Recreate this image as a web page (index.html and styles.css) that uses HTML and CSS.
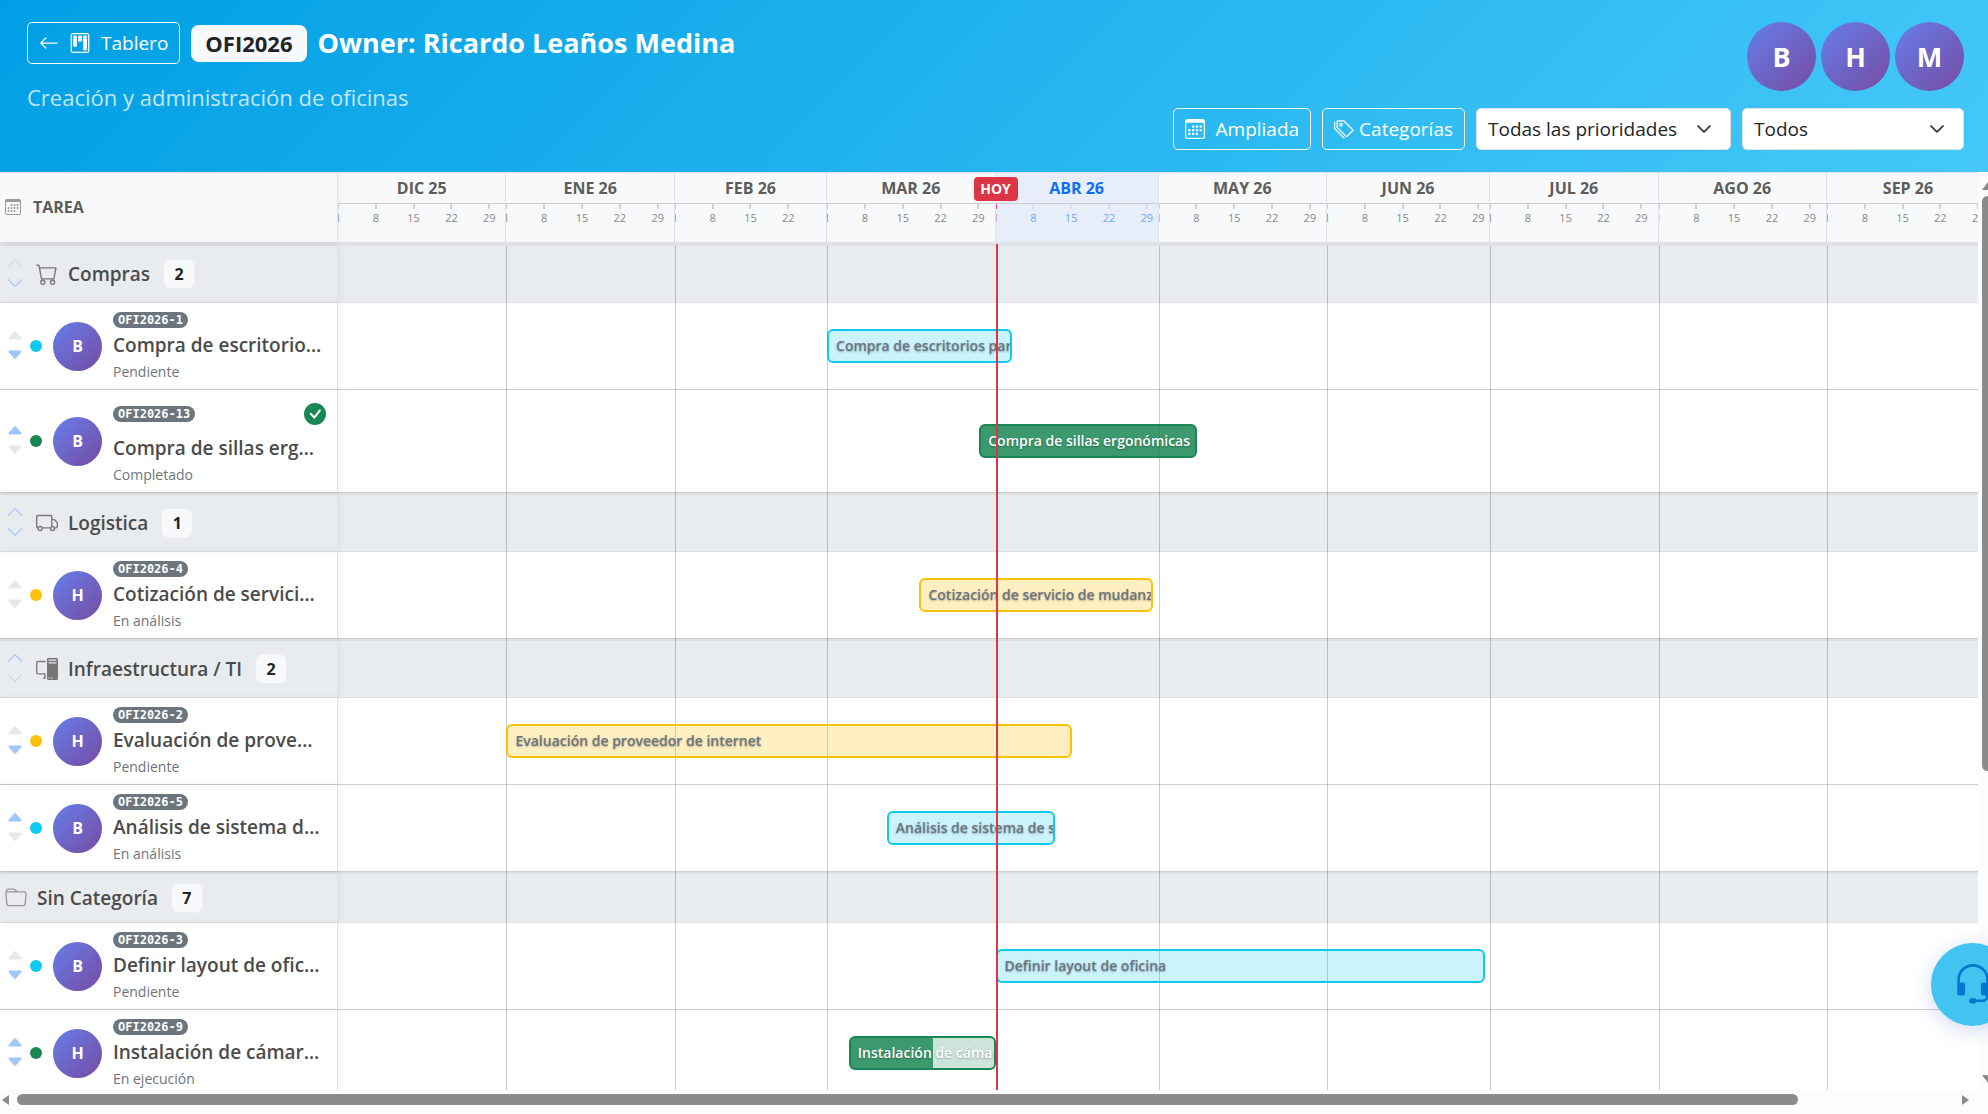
FILE: index.html
```html
<!DOCTYPE html>
<html lang="es">
<head>
<meta charset="utf-8">
<title>OFI2026 - Cronograma</title>
<link rel="stylesheet" href="styles.css">
</head>
<body>
<svg class="sprite" aria-hidden="true">
  <symbol id="i-calendar" viewBox="0 0 16 16"><path d="M14 0H2a2 2 0 0 0-2 2v12a2 2 0 0 0 2 2h12a2 2 0 0 0 2-2V2a2 2 0 0 0-2-2M1 3.857C1 3.384 1.448 3 2 3h12c.552 0 1 .384 1 .857v10.286c0 .473-.448.857-1 .857H2c-.552 0-1-.384-1-.857z"/><path d="M6.500 7a1 1 0 1 0 0-2 1 1 0 0 0 0 2m3 0a1 1 0 1 0 0-2 1 1 0 0 0 0 2m3 0a1 1 0 1 0 0-2 1 1 0 0 0 0 2m-9 3a1 1 0 1 0 0-2 1 1 0 0 0 0 2m3 0a1 1 0 1 0 0-2 1 1 0 0 0 0 2m3 0a1 1 0 1 0 0-2 1 1 0 0 0 0 2m3 0a1 1 0 1 0 0-2 1 1 0 0 0 0 2m-9 3a1 1 0 1 0 0-2 1 1 0 0 0 0 2m3 0a1 1 0 1 0 0-2 1 1 0 0 0 0 2m3 0a1 1 0 1 0 0-2 1 1 0 0 0 0 2"/></symbol>
  <symbol id="i-arrow" viewBox="0 0 16 16"><path fill-rule="evenodd" d="M15 8a.5.5 0 0 0-.5-.5H2.707l3.147-3.146a.5.5 0 1 0-.708-.708l-4 4a.5.5 0 0 0 0 .708l4 4a.5.5 0 0 0 .708-.708L2.707 8.500H14.500A.5.5 0 0 0 15 8"/></symbol>
  <symbol id="i-board" viewBox="0 0 16 16"><path d="M13.500 1a1 1 0 0 1 1 1v12a1 1 0 0 1-1 1h-11a1 1 0 0 1-1-1V2a1 1 0 0 1 1-1zm-11-1a2 2 0 0 0-2 2v12a2 2 0 0 0 2 2h11a2 2 0 0 0 2-2V2a2 2 0 0 0-2-2z"/><path d="M6.500 3a1 1 0 0 1 1-1h1a1 1 0 0 1 1 1v3a1 1 0 0 1-1 1h-1a1 1 0 0 1-1-1zm-4 0a1 1 0 0 1 1-1h1a1 1 0 0 1 1 1v7a1 1 0 0 1-1 1h-1a1 1 0 0 1-1-1zm8 0a1 1 0 0 1 1-1h1a1 1 0 0 1 1 1v10a1 1 0 0 1-1 1h-1a1 1 0 0 1-1-1z"/></symbol>
  <symbol id="i-tags" viewBox="0 0 16 16"><path d="M3 2v4.586l7 7L14.586 9l-7-7zM2 2a1 1 0 0 1 1-1h4.586a1 1 0 0 1 .707.293l7 7a1 1 0 0 1 0 1.414l-4.586 4.586a1 1 0 0 1-1.414 0l-7-7A1 1 0 0 1 2 6.586z"/><path d="M5.500 5a.5.5 0 1 1 0-1 .5.5 0 0 1 0 1m0 1a1.500 1.500 0 1 0 0-3 1.500 1.500 0 0 0 0 3M1 7.086a1 1 0 0 0 .293.707L8.750 15.250l-.043.043a1 1 0 0 1-1.414 0l-7-7A1 1 0 0 1 0 7.586V3a1 1 0 0 1 1-1z"/></symbol>
  <symbol id="i-up" viewBox="0 0 16 16"><path d="M7.646 4.646a.5.5 0 0 1 .708 0l6 6a.5.5 0 0 1-.708.708L8 5.707l-5.646 5.647a.5.5 0 0 1-.708-.708z"/></symbol>
  <symbol id="i-down" viewBox="0 0 16 16"><path d="M1.646 4.646a.5.5 0 0 1 .708 0L8 10.293l5.646-5.647a.5.5 0 0 1 .708.708l-6 6a.5.5 0 0 1-.708 0l-6-6a.5.5 0 0 1 0-.708"/></symbol>
  <symbol id="i-cup" viewBox="0 0 16 16"><path d="m7.247 4.860-4.796 5.481c-.566.647-.106 1.659.753 1.659h9.592a1 1 0 0 0 .753-1.659l-4.796-5.480a1 1 0 0 0-1.506 0z"/></symbol>
  <symbol id="i-cdown" viewBox="0 0 16 16"><path d="M7.247 11.140 2.451 5.658C1.885 5.013 2.345 4 3.204 4h9.592a1 1 0 0 1 .753 1.659l-4.796 5.480a1 1 0 0 1-1.506 0z"/></symbol>
  <symbol id="i-cart" viewBox="0 0 16 16"><path d="M0 1.500A.5.5 0 0 1 .5 1H2a.5.5 0 0 1 .485.379L2.890 3H14.500a.5.5 0 0 1 .491.592l-1.500 8A.5.5 0 0 1 13 12H4a.5.5 0 0 1-.491-.408L2.010 3.607 1.610 2H.5a.5.5 0 0 1-.5-.5M3.102 4l1.313 7h8.170l1.313-7zM5 12a2 2 0 1 0 0 4 2 2 0 0 0 0-4m7 0a2 2 0 1 0 0 4 2 2 0 0 0 0-4m-7 1a1 1 0 1 1 0 2 1 1 0 0 1 0-2m7 0a1 1 0 1 1 0 2 1 1 0 0 1 0-2"/></symbol>
  <symbol id="i-truck" viewBox="0 0 16 16"><path d="M0 3.500A1.500 1.500 0 0 1 1.500 2h9A1.500 1.500 0 0 1 12 3.500V5h1.020a1.500 1.500 0 0 1 1.170.563l1.481 1.850a1.500 1.500 0 0 1 .329.938V10.500a1.500 1.500 0 0 1-1.500 1.500H14a2 2 0 1 1-4 0H5a2 2 0 1 1-3.998-.085A1.500 1.500 0 0 1 0 10.500zm1.294 7.456A2 2 0 0 1 4.732 11h5.536a2 2 0 0 1 .732-.732V3.500a.5.5 0 0 0-.5-.5h-9a.5.5 0 0 0-.5.5v7a.5.5 0 0 0 .294.456M12 10a2 2 0 0 1 1.732 1h.768a.5.5 0 0 0 .5-.5V8.350a.5.5 0 0 0-.110-.312l-1.480-1.850A.5.5 0 0 0 13.020 6H12zm-9 1a1 1 0 1 0 0 2 1 1 0 0 0 0-2m9 0a1 1 0 1 0 0 2 1 1 0 0 0 0-2"/></symbol>
  <symbol id="i-pc" viewBox="0 0 16 16"><path d="M8 1a1 1 0 0 1 1-1h6a1 1 0 0 1 1 1v14a1 1 0 0 1-1 1H9a1 1 0 0 1-1-1zm1 13.500a.5.5 0 1 0 1 0 .5.5 0 0 0-1 0m2 0a.5.5 0 1 0 1 0 .5.5 0 0 0-1 0M9.500 1a.5.5 0 0 0 0 1h5a.5.5 0 0 0 0-1zM9 3.500a.5.5 0 0 0 .5.5h5a.5.5 0 0 0 0-1h-5a.5.5 0 0 0-.5.5M1.500 2A1.500 1.500 0 0 0 0 3.500v7A1.500 1.500 0 0 0 1.500 12H6v2h-.5a.5.5 0 0 0 0 1H7v-4H1.500a.5.5 0 0 1-.5-.5v-7a.5.5 0 0 1 .5-.5H7V2z"/></symbol>
  <symbol id="i-folder" viewBox="0 0 16 16"><path d="M.54 3.870.5 3a2 2 0 0 1 2-2h3.672a2 2 0 0 1 1.414.586l.828.828A2 2 0 0 0 9.828 3h3.982a2 2 0 0 1 1.992 2.181l-.637 7A2 2 0 0 1 13.174 14H2.826a2 2 0 0 1-1.991-1.819l-.637-7a2 2 0 0 1 .342-1.310zM2.190 4a1 1 0 0 0-.996 1.090l.637 7a1 1 0 0 0 .995.910h10.348a1 1 0 0 0 .995-.910l.637-7A1 1 0 0 0 13.810 4zm4.690-1.707A1 1 0 0 0 6.172 2H2.500a1 1 0 0 0-1 .981l.006.139q.323-.119.684-.12h5.396z"/></symbol>
  <symbol id="i-check" viewBox="0 0 16 16"><path d="M16 8A8 8 0 1 1 0 8a8 8 0 0 1 16 0m-3.970-3.030a.75.75 0 0 0-1.080.022L7.477 9.417 5.384 7.323a.75.75 0 0 0-1.060 1.060L6.970 11.030a.75.75 0 0 0 1.079-.020l3.992-4.990a.75.75 0 0 0-.010-1.050z"/></symbol>
  <symbol id="i-headset" viewBox="0 0 16 16"><path d="M8 1a5 5 0 0 0-5 5v1h1a1 1 0 0 1 1 1v3a1 1 0 0 1-1 1H3a1 1 0 0 1-1-1V6a6 6 0 1 1 12 0v6a2.500 2.500 0 0 1-2.500 2.500H9.366a1 1 0 0 1-.866.500h-1a1 1 0 1 1 0-2h1a1 1 0 0 1 .866.500H11.500A1.500 1.500 0 0 0 13 12h-1a1 1 0 0 1-1-1V8a1 1 0 0 1 1-1h1V6a5 5 0 0 0-5-5"/></symbol>
</svg>

<header class="hero">
  <div class="hero-info">
    <div class="hero-line">
      <a class="btn" href="#tablero"><svg><use href="#i-arrow"/></svg><svg><use href="#i-board"/></svg>Tablero</a>
      <span class="code">OFI2026</span>
      <h1>Owner: Ricardo Leaños Medina</h1>
    </div>
    <p>Creación y administración de oficinas</p>
  </div>
  <div class="hero-side">
    <div class="people"><span class="avatar">B</span><span class="avatar">H</span><span class="avatar">M</span></div>
    <div class="filters">
      <button class="btn" type="button"><svg><use href="#i-calendar"/></svg>Ampliada</button>
      <button class="btn snug" type="button"><svg><use href="#i-tags"/></svg>Categorías</button>
      <div class="select prio"><select aria-label="Prioridad"><option>Todas las prioridades</option></select><svg><use href="#i-down"/></svg></div>
      <div class="select all"><select aria-label="Estado"><option>Todos</option></select><svg><use href="#i-down"/></svg></div>
    </div>
  </div>
</header>

<main class="gantt">
  <div class="chart">
    <div class="row head">
      <div class="side"><svg><use href="#i-calendar"/></svg>TAREA</div>
      <div class="view"><div class="line months">
        <div class="month m31"><b>DIC 25</b><div class="days"><i>1</i><i>8</i><i>15</i><i>22</i><i>29</i></div></div>
        <div class="month m31"><b>ENE 26</b><div class="days"><i>1</i><i>8</i><i>15</i><i>22</i><i>29</i></div></div>
        <div class="month m28"><b>FEB 26</b><div class="days"><i>1</i><i>8</i><i>15</i><i>22</i></div></div>
        <div class="month m31"><b>MAR 26</b><div class="days"><i>1</i><i>8</i><i>15</i><i>22</i><i>29</i></div></div>
        <div class="month m30 now"><b>ABR 26</b><div class="days"><i>1</i><i>8</i><i>15</i><i>22</i><i>29</i></div></div>
        <div class="month m31"><b>MAY 26</b><div class="days"><i>1</i><i>8</i><i>15</i><i>22</i><i>29</i></div></div>
        <div class="month m30"><b>JUN 26</b><div class="days"><i>1</i><i>8</i><i>15</i><i>22</i><i>29</i></div></div>
        <div class="month m31"><b>JUL 26</b><div class="days"><i>1</i><i>8</i><i>15</i><i>22</i><i>29</i></div></div>
        <div class="month m31"><b>AGO 26</b><div class="days"><i>1</i><i>8</i><i>15</i><i>22</i><i>29</i></div></div>
        <div class="month m30"><b>SEP 26</b><div class="days"><i>1</i><i>8</i><i>15</i><i>22</i><i>29</i></div></div>
      </div></div>
    </div>

    <div class="row cat">
      <div class="side"><span class="move"><svg class="off"><use href="#i-up"/></svg><svg><use href="#i-down"/></svg></span><svg class="icon"><use href="#i-cart"/></svg>Compras<span class="count">2</span></div>
      <div class="view"></div>
    </div>
    <div class="row task">
      <div class="side"><span class="move"><svg class="off"><use href="#i-cup"/></svg><svg><use href="#i-cdown"/></svg></span><span class="dot info"></span><span class="avatar">B</span>
        <div class="text"><div class="top"><span class="id">OFI2026-1</span></div><a href="#t1">Compra de escritorios para oficina</a><small>Pendiente</small></div></div>
      <div class="view"><div class="line"><div class="bar info" style="--from:90;--len:34">Compra de escritorios para oficina</div></div></div>
    </div>
    <div class="row task done">
      <div class="side"><span class="move"><svg><use href="#i-cup"/></svg><svg class="off"><use href="#i-cdown"/></svg></span><span class="dot ok"></span><span class="avatar">B</span>
        <div class="text"><div class="top"><span class="id">OFI2026-13</span><svg><use href="#i-check"/></svg></div><a href="#t13">Compra de sillas ergonómicas</a><small>Completado</small></div></div>
      <div class="view"><div class="line"><div class="bar ok" style="--from:118;--len:40">Compra de sillas ergonómicas</div></div></div>
    </div>

    <div class="row cat">
      <div class="side"><span class="move"><svg><use href="#i-up"/></svg><svg><use href="#i-down"/></svg></span><svg class="icon"><use href="#i-truck"/></svg>Logistica<span class="count">1</span></div>
      <div class="view"></div>
    </div>
    <div class="row task">
      <div class="side"><span class="move"><svg class="off"><use href="#i-cup"/></svg><svg class="off"><use href="#i-cdown"/></svg></span><span class="dot warn"></span><span class="avatar">H</span>
        <div class="text"><div class="top"><span class="id">OFI2026-4</span></div><a href="#t4">Cotización de servicio de mudanza</a><small>En análisis</small></div></div>
      <div class="view"><div class="line"><div class="bar warn" style="--from:107;--len:43">Cotización de servicio de mudanza</div></div></div>
    </div>

    <div class="row cat">
      <div class="side"><span class="move"><svg><use href="#i-up"/></svg><svg class="off"><use href="#i-down"/></svg></span><svg class="icon"><use href="#i-pc"/></svg>Infraestructura / TI<span class="count">2</span></div>
      <div class="view"></div>
    </div>
    <div class="row task">
      <div class="side"><span class="move"><svg class="off"><use href="#i-cup"/></svg><svg><use href="#i-cdown"/></svg></span><span class="dot warn"></span><span class="avatar">H</span>
        <div class="text"><div class="top"><span class="id">OFI2026-2</span></div><a href="#t2">Evaluación de proveedor de internet</a><small>Pendiente</small></div></div>
      <div class="view"><div class="line"><div class="bar warn" style="--from:31;--len:104">Evaluación de proveedor de internet</div></div></div>
    </div>
    <div class="row task">
      <div class="side"><span class="move"><svg><use href="#i-cup"/></svg><svg class="off"><use href="#i-cdown"/></svg></span><span class="dot info"></span><span class="avatar">B</span>
        <div class="text"><div class="top"><span class="id">OFI2026-5</span></div><a href="#t5">Análisis de sistema de seguridad</a><small>En análisis</small></div></div>
      <div class="view"><div class="line"><div class="bar info" style="--from:101;--len:31">Análisis de sistema de seguridad</div></div></div>
    </div>

    <div class="row cat plain">
      <div class="side"><svg class="icon"><use href="#i-folder"/></svg>Sin Categoría<span class="count">7</span></div>
      <div class="view"></div>
    </div>
    <div class="row task">
      <div class="side"><span class="move"><svg class="off"><use href="#i-cup"/></svg><svg><use href="#i-cdown"/></svg></span><span class="dot info"></span><span class="avatar">B</span>
        <div class="text"><div class="top"><span class="id">OFI2026-3</span></div><a href="#t3">Definir layout de oficina</a><small>Pendiente</small></div></div>
      <div class="view"><div class="line"><div class="bar info" style="--from:121;--len:90">Definir layout de oficina</div></div></div>
    </div>
    <div class="row task">
      <div class="side"><span class="move"><svg><use href="#i-cup"/></svg><svg><use href="#i-cdown"/></svg></span><span class="dot ok"></span><span class="avatar">H</span>
        <div class="text"><div class="top"><span class="id">OFI2026-9</span></div><a href="#t9">Instalación de cámaras</a><small>En ejecución</small></div></div>
      <div class="view"><div class="line"><div class="bar ok part" style="--from:94;--len:27;--done:57%">Instalación de cámaras</div></div></div>
    </div>

    <div class="overlay grid"><div class="line months"><span></span><span></span><span></span><span></span><span></span><span></span><span></span><span></span><span></span><span></span></div></div>
    <div class="overlay marker"><div class="line"><span class="today">HOY</span></div></div>
  </div>
  <div class="vbar"><svg viewBox="0 0 12 8"><path d="M6 0 12 8H0z"/></svg><span></span><svg class="end" viewBox="0 0 12 8"><path d="M0 0H12L6 8z"/></svg></div>
  <div class="hbar"><svg viewBox="0 0 8 10"><path d="M7 0V10L0 5z"/></svg><span></span><svg viewBox="0 0 8 10"><path d="M0 0V10L7 5z"/></svg></div>
</main>
<button class="help" type="button" aria-label="Soporte"><svg><use href="#i-headset"/></svg></button>
</body>
</html>
```
FILE: styles.css
```css
* { box-sizing: border-box; }

body {
  margin: 0;
  height: 100vh;
  display: flex;
  flex-direction: column;
  overflow: hidden;
  font-family: "Open Sans", "Noto Sans", sans-serif;
  font-size: 19px;
  line-height: 30px;
  color: #212529;
  background: #fcfcfc;
}

svg { width: 20px; height: 20px; fill: currentColor; flex: none; }
.sprite { position: absolute; width: 0; height: 0; }
a { color: inherit; text-decoration: none; }

/* Page header */
.hero {
  display: flex;
  justify-content: space-between;
  height: 172px;
  padding: 22px 24px 0 27px;
  color: #fff;
  background: linear-gradient(135deg, #009fe5, #45c8f8);
  flex: none;
}
.hero-line { display: flex; align-items: center; gap: 11px; }
.hero h1 { margin: 0; font-size: 27px; font-weight: 700; line-height: 42px; }
.hero p { margin: 18px 0 0; font-size: 22px; color: rgba(255, 255, 255, .75); }

.btn {
  display: flex;
  align-items: center;
  gap: 11px;
  height: 42px;
  padding: 0 11px;
  border: 1px solid #fff;
  border-radius: 5px;
  background: none;
  color: #fff;
  font: inherit;
}
.btn.snug { gap: 5px; }
.code {
  padding: 0 14px;
  border-radius: 8px;
  background: #f8f9fa;
  color: #212529;
  font-size: 22px;
  font-weight: 700;
  line-height: 37px;
}
.hero-side { display: flex; flex-direction: column; align-items: flex-end; gap: 17px; }
.people { display: flex; gap: 5px; }
.avatar {
  display: grid;
  place-items: center;
  border-radius: 50%;
  color: #fff;
  font-weight: 700;
  background: linear-gradient(135deg, #667eea, #764ba2);
  flex: none;
}
.people .avatar { width: 69px; height: 69px; font-size: 27px; }
.filters { display: flex; gap: 11px; }
.select { position: relative; height: 42px; }
.select select {
  width: 100%;
  height: 100%;
  padding: 0 11px;
  border: 1px solid #dee2e6;
  border-radius: 5px;
  background: #fff;
  color: #212529;
  font: inherit;
  appearance: none;
}
.select svg { position: absolute; right: 19px; top: 13px; width: 16px; height: 16px; stroke: #343a40; color: #343a40; }
.prio { width: 255px; }
.all { width: 222px; }

/* Timeline */
.gantt {
  flex: 1;
  min-height: 0;
  display: grid;
  grid-template: minmax(0, 1fr) 24px / minmax(0, 1fr) 10px;
}
.chart { position: relative; overflow: hidden; background: #fff; }
.row { display: grid; grid-template-columns: 338px minmax(0, 1fr); }
.side {
  display: flex;
  align-items: center;
  min-width: 0;
  border-right: 1px solid #dee2e6;
  box-shadow: 2px 0 8px rgba(0, 0, 0, .05);
  color: #4b4b4b;
}
.view { overflow: hidden; }
.line { position: relative; width: calc(100% + 12px); height: 100%; }

.head {
  height: 72px;
  border-top: 1px solid #dee2e6;
  border-bottom: 2px solid #dee2e6;
  background: #f8f9fa;
}
.head .side { padding: 0 0 2px 5px; gap: 12px; font-size: 16px; font-weight: 700; color: #5c5c5c; }
.head .side svg { width: 16px; height: 16px; fill: #999; }
.months { display: grid; grid-template-columns: 31fr 31fr 28fr 31fr 30fr 31fr 30fr 31fr 31fr 30fr; }
.month { min-width: 0; overflow: hidden; border-right: 1px solid #dee2e6; text-align: center; }
.month b { display: block; height: 31px; border-bottom: 1px solid #ccc; font-size: 16px; font-weight: 700; line-height: 31px; color: #5c5c5c; }
.days { display: grid; }
.m28 .days { grid-template-columns: repeat(4, 7fr) 0; }
.m30 .days { grid-template-columns: repeat(4, 7fr) 2fr; }
.m31 .days { grid-template-columns: repeat(4, 7fr) 3fr; }
.days i {
  width: 0;
  display: flex;
  flex-direction: column;
  align-items: center;
  font-size: 11px;
  font-style: normal;
  line-height: 18px;
  color: #888;
}
.days i::before { content: ""; width: 2px; height: 5px; background: #d3d3d3; }
.now { background: #e7eefa; }
.now b { color: #0d6efd; }
.now .days i { color: #6ea8fe; }
.now .days i::before { background: #cfe2ff; }
.now .days i:first-child { color: #dc3545; }
.now .days i:first-child::before { background: #f04a9a; }

.cat { height: 59px; border-top: 2px solid #dee2e6; border-bottom: 1px solid #dee2e6; background: #e9ecef; font-weight: 600; }
.cat .side { padding-left: 5px; }
.cat .icon { width: 22px; height: 22px; margin: 0 10px 0 11px; color: #777; }
.cat.plain { height: 51px; }
.plain .icon { margin-left: 0; color: #999; }
.count {
  min-width: 32px;
  margin-left: 13px;
  border: 1px solid #eceef0;
  border-radius: 7px;
  background: #f8f9fa;
  color: #212529;
  font-size: 16px;
  font-weight: 700;
  line-height: 28px;
  text-align: center;
}
.move { display: flex; flex-direction: column; gap: 2px; width: 20px; margin-bottom: 2px; align-items: center; color: #9ec5fe; }
.move svg { width: 18px; height: 18px; }
.move .off { color: #d5d8db; }
.task .move .off { color: #e6e8ea; }

.task { height: 87px; border-bottom: 1px solid #ccc; }
.done { height: 103px; }
.task .side { padding: 0 11px 0 5px; }
.dot { width: 12px; height: 12px; margin: 0 11px 0 5px; border-radius: 50%; flex: none; }
.dot.info { background: #0dcaf0; }
.dot.ok { background: #198754; }
.dot.warn { background: #ffc107; }
.side .avatar { width: 49px; height: 49px; margin-right: 11px; font-size: 16px; }
.text { flex: 1; min-width: 0; padding-top: 2px; }
.top { display: flex; justify-content: space-between; align-items: center; height: 20px; }
.done .top { height: 34px; margin-bottom: 2px; }
.top svg { width: 22px; height: 22px; color: #198754; }
.id {
  padding: 0 5px;
  border-radius: 8px;
  background: #6c757d;
  color: #fff;
  font: 700 12px/16px "DejaVu Sans Mono", "Liberation Mono", monospace;
}
.text a { display: block; margin-right: 4px; overflow: hidden; white-space: nowrap; text-overflow: ellipsis; font-weight: 600; }
.text small { display: block; font-size: 14px; line-height: 24px; color: #6c757d; }

.task .line { display: flex; align-items: center; }
.bar {
  position: relative;
  z-index: 2;
  margin-left: calc(var(--from) / 304 * 100%);
  width: calc(var(--len) / 304 * 100%);
  height: 34px;
  padding: 0 7px;
  overflow: hidden;
  white-space: nowrap;
  border: 2px solid;
  border-radius: 6px;
  font-size: 14px;
  font-weight: 600;
  line-height: 29px;
  color: #6c757d;
  text-shadow: 0 1px 2px rgba(0, 0, 0, .3);
}
.bar.info { border-color: #0dcaf0; background: rgba(13, 202, 240, .22); }
.bar.warn { border-color: #ffc107; background: rgba(255, 193, 7, .25); }
.bar.ok { border-color: #198754; background: rgba(25, 135, 84, .85); color: #fff; }
.bar.part { background: linear-gradient(90deg, rgba(25, 135, 84, .85) var(--done), rgba(25, 135, 84, .22) var(--done)); }

/* Month separators run under the bars, the marker of today runs over them */
.overlay { position: absolute; inset: 0 0 0 338px; overflow: hidden; pointer-events: none; }
.grid { top: 74px; z-index: 1; }
.grid span + span { border-left: 1px solid rgba(0, 0, 0, .2); }
.marker { z-index: 3; }
.today {
  position: absolute;
  left: calc(121 / 304 * 100%);
  top: 5px;
  width: 44px;
  margin-left: -22px;
  border-radius: 4px;
  background: #dc3545;
  color: #fff;
  font-size: 14px;
  font-weight: 700;
  line-height: 24px;
  text-align: center;
}
.marker .line::before {
  content: "";
  position: absolute;
  left: calc(121 / 304 * 100%);
  top: 72px;
  bottom: 0;
  width: 2px;
  background: #dc3545;
}

/* Scrollbars */
.vbar { position: relative; overflow: hidden; background: #fcfcfc; }
.vbar svg { position: absolute; left: 4px; top: 10px; width: 12px; height: 8px; fill: #8b8b8b; }
.vbar .end { top: auto; bottom: 7px; }
.vbar span { position: absolute; left: 4px; top: 24px; width: 11px; height: 575px; border-radius: 6px; background: #8b8b8b; }
.hbar { grid-column: 1 / -1; display: flex; align-items: center; gap: 7px; padding: 0 18px 5px 2px; background: #fcfcfc; }
.hbar svg { width: 8px; height: 10px; fill: #8b8b8b; }
.hbar span { flex: 0 1 1781px; height: 11px; border-radius: 6px; background: #8b8b8b; }
.hbar svg:last-child { margin-left: auto; }

.help {
  position: fixed;
  right: -26px;
  bottom: 88px;
  width: 83px;
  height: 83px;
  z-index: 4;
  display: grid;
  place-items: center;
  padding: 0;
  border: 0;
  border-radius: 50%;
  background: #42c4f1;
  color: #0277d0;
  box-shadow: 0 4px 20px rgba(102, 126, 234, .3);
}
.help svg { width: 42px; height: 42px; }
```
